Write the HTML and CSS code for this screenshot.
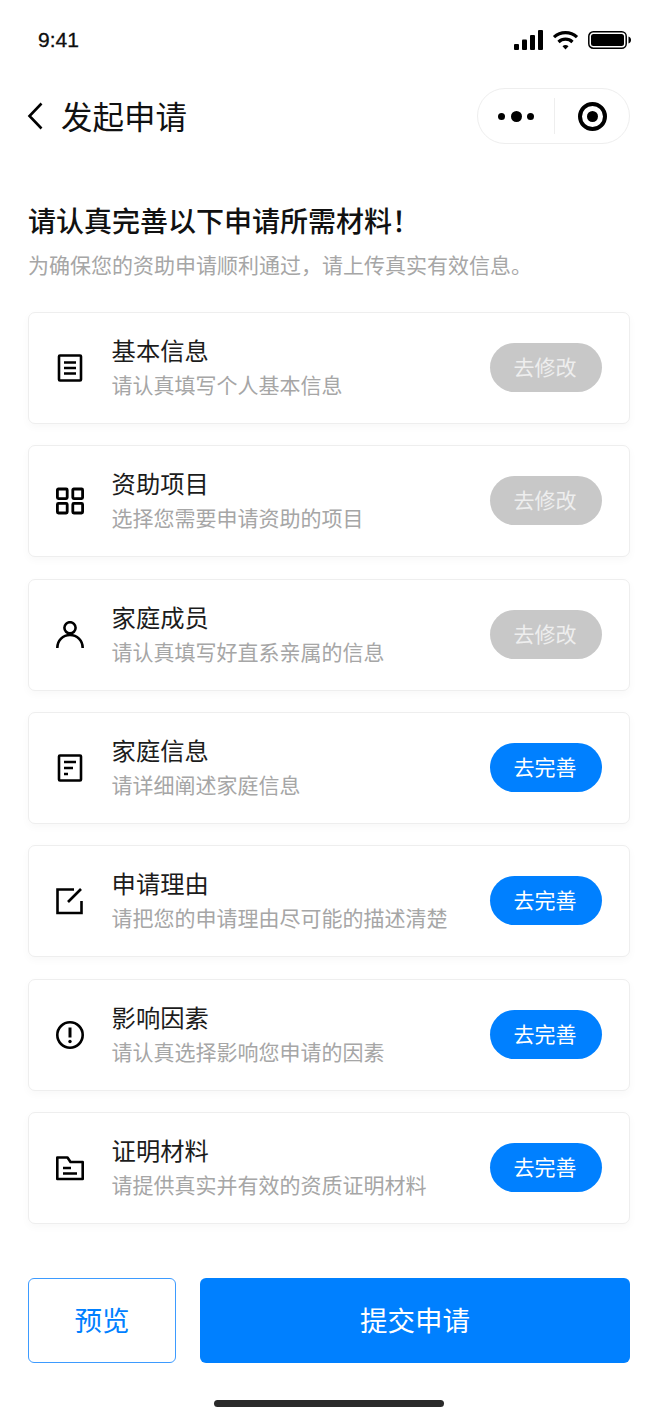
FILE: index.html
```html
<!DOCTYPE html>
<html lang="zh-CN">
<head>
    <meta charset="UTF-8">
    <meta name="viewport" content="width=device-width, initial-scale=1.0">
    <title>发起申请</title>
    <link rel="stylesheet" href="styles.css">
</head>
<body>
    <div class="status_bar">
        <span class="time">9:41</span>
        <div class="status_icons">
            <svg width="29" height="20" viewBox="0 0 29 20" fill="#000">
                <rect x="0" y="14" width="5" height="6" rx="1"/>
                <rect x="8" y="9.5" width="5" height="10.5" rx="1"/>
                <rect x="16" y="5" width="5" height="15" rx="1"/>
                <rect x="24" y="0" width="5" height="20" rx="1"/>
            </svg>
            <svg width="27" height="20" viewBox="0 0 26 20" fill="none" stroke="#000" stroke-width="3.2">
                <path d="M1.5 7.2C8 1 18 1 24.5 7.2"/>
                <path d="M6 12C10 8.2 16 8.2 20 12"/>
                <path d="M10 16.2L13 19.4L16 16.2C14.3 14.6 11.7 14.6 10 16.2Z" fill="#000" stroke="none"/>
            </svg>
            <svg width="43" height="18" viewBox="0 0 43 18">
                <rect x="0.8" y="0.8" width="37.4" height="16.4" rx="4.5" fill="none" stroke="#000" stroke-width="1.5"/>
                <rect x="3" y="3" width="33" height="12" rx="2.5" fill="#000"/>
                <path d="M40.5 5.5C42 6 43 7.3 43 9C43 10.7 42 12 40.5 12.5Z" fill="#000"/>
            </svg>
        </div>
    </div>

    <div class="nav_bar">
        <svg class="back_icon" width="16" height="28" viewBox="0 0 16 28" fill="none" stroke="#000" stroke-width="2.6">
            <path d="M14.5 1.5L2.5 14L14.5 26.5"/>
        </svg>
        <h1 class="nav_title">发起申请</h1>
        <div class="capsule">
            <div class="capsule_more">
                <i class="dot"></i><i class="dot dot_big"></i><i class="dot"></i>
            </div>
            <div class="capsule_line"></div>
            <div class="capsule_close"><i></i></div>
        </div>
    </div>

    <div class="intro">
        <h2>请认真完善以下申请所需材料！</h2>
        <p>为确保您的资助申请顺利通过，请上传真实有效信息。</p>
    </div>

    <div class="card_list">
        <div class="card">
            <svg class="card_icon" viewBox="0 0 28 28" fill="none" stroke="#000" stroke-width="2.6">
                <rect x="3" y="1.5" width="22" height="25" rx="1"/>
                <path d="M8 8.5H20M8 14H20M8 19.5H20"/>
            </svg>
            <div class="card_text">
                <div class="card_title">基本信息</div>
                <div class="card_desc">请认真填写个人基本信息</div>
            </div>
            <button class="pill pill_done">去修改</button>
        </div>
        <div class="card">
            <svg class="card_icon" viewBox="0 0 28 28" fill="none" stroke="#000" stroke-width="2.8">
                <rect x="1.4" y="2" width="9.8" height="9.6" rx="1"/>
                <rect x="16.8" y="2" width="9.8" height="9.6" rx="1"/>
                <rect x="1.4" y="16.4" width="9.8" height="9.6" rx="1"/>
                <rect x="16.8" y="16.4" width="9.8" height="9.6" rx="1"/>
            </svg>
            <div class="card_text">
                <div class="card_title">资助项目</div>
                <div class="card_desc">选择您需要申请资助的项目</div>
            </div>
            <button class="pill pill_done">去修改</button>
        </div>
        <div class="card">
            <svg class="card_icon" viewBox="0 0 28 28" fill="none" stroke="#000" stroke-width="2.6">
                <circle cx="14" cy="6.8" r="5.6"/>
                <path d="M1.3 27C1.3 19.5 7 14 14 14C21 14 26.7 19.5 26.7 27"/>
            </svg>
            <div class="card_text">
                <div class="card_title">家庭成员</div>
                <div class="card_desc">请认真填写好直系亲属的信息</div>
            </div>
            <button class="pill pill_done">去修改</button>
        </div>
        <div class="card">
            <svg class="card_icon" viewBox="0 0 28 28" fill="none" stroke="#000" stroke-width="2.6">
                <rect x="3" y="1.5" width="22" height="25" rx="1"/>
                <path d="M8 8H20M8 14H17M8 20H12"/>
            </svg>
            <div class="card_text">
                <div class="card_title">家庭信息</div>
                <div class="card_desc">请详细阐述家庭信息</div>
            </div>
            <button class="pill pill_todo">去完善</button>
        </div>
        <div class="card">
            <svg class="card_icon" viewBox="0 0 28 28" fill="none" stroke="#000" stroke-width="2.6">
                <path d="M18 2.5H1.5V26H25.5V14"/>
                <path d="M12 15L25 2"/>
            </svg>
            <div class="card_text">
                <div class="card_title">申请理由</div>
                <div class="card_desc">请把您的申请理由尽可能的描述清楚</div>
            </div>
            <button class="pill pill_todo">去完善</button>
        </div>
        <div class="card">
            <svg class="card_icon" viewBox="0 0 28 28" fill="none" stroke="#000" stroke-width="2.6">
                <circle cx="14" cy="14" r="12.7"/>
                <path d="M14 6.5V16.5" stroke-width="3"/>
                <circle cx="14" cy="20.5" r="1.7" fill="#000" stroke="none"/>
            </svg>
            <div class="card_text">
                <div class="card_title">影响因素</div>
                <div class="card_desc">请认真选择影响您申请的因素</div>
            </div>
            <button class="pill pill_todo">去完善</button>
        </div>
        <div class="card">
            <svg class="card_icon" viewBox="0 0 28 28" fill="none" stroke="#000" stroke-width="2.6">
                <path d="M1.3 3.5H11.5L14.5 8H26.7V25H1.3Z" stroke-linejoin="round"/>
                <path d="M7 14H15M7 19.5H21"/>
            </svg>
            <div class="card_text">
                <div class="card_title">证明材料</div>
                <div class="card_desc">请提供真实并有效的资质证明材料</div>
            </div>
            <button class="pill pill_todo">去完善</button>
        </div>
    </div>

    <div class="actions">
        <button class="btn_preview">预览</button>
        <button class="btn_submit">提交申请</button>
    </div>
    <div class="home_bar"></div>
</body>
</html>
```

FILE: styles.css
```css
* {
    box-sizing: border-box;
}
html, body {
    margin: 0;
    padding: 0;
}
body {
    width: 658px;
    height: 1425px;
    overflow: hidden;
    background-color: #fff;
    color: #111;
    font-family: "Noto Sans CJK SC", "Liberation Sans", sans-serif;
}
button {
    font-family: inherit;
    border: none;
    padding: 0;
}

.status_bar {
    height: 80px;
    padding: 0 27px 0 38px;
    display: flex;
    justify-content: space-between;
    align-items: center;
}
.time {
    font-family: "Liberation Sans", sans-serif;
    font-size: 21px;
    -webkit-text-stroke: 0.3px #000;
}
.status_icons {
    display: flex;
    align-items: center;
    gap: 9px;
}

.nav_bar {
    height: 56px;
    margin-top: 8px;
    padding: 0 28px;
    display: flex;
    align-items: center;
}
.back_icon {
    margin: 0 18px 0 -1px;
}
.nav_title {
    margin: 0 0 2px;
    font-size: 31.5px;
    font-weight: 400;
    flex: 1;
}
.capsule {
    width: 153px;
    height: 56px;
    border: 1px solid #eeeeee;
    border-radius: 28px;
    display: flex;
    align-items: center;
}
.capsule_more {
    width: 76px;
    display: flex;
    justify-content: center;
    align-items: center;
    gap: 5.5px;
}
.dot {
    width: 7px;
    height: 7px;
    border-radius: 50%;
    background-color: #000;
}
.dot_big {
    width: 11px;
    height: 11px;
}
.capsule_line {
    width: 1px;
    height: 36px;
    background-color: #eeeeee;
}
.capsule_close {
    flex: 1;
    display: flex;
    justify-content: center;
}
.capsule_close i {
    width: 29px;
    height: 29px;
    border: 4px solid #000;
    border-radius: 50%;
    display: flex;
    align-items: center;
    justify-content: center;
}
.capsule_close i::after {
    content: "";
    width: 11px;
    height: 11px;
    border-radius: 50%;
    background-color: #000;
}

.intro {
    margin-top: 54px;
    padding: 0 28px;
}
.intro h2 {
    margin: 0;
    font-size: 28px;
    line-height: 45px;
    font-weight: 500;
}
.intro p {
    margin: 0;
    font-size: 21px;
    line-height: 42px;
    color: #a6a6a6;
}

.card_list {
    margin-top: 27px;
    padding: 0 28px;
    display: flex;
    flex-direction: column;
    gap: 21.33px;
}
.card {
    height: 112px;
    padding: 0 27px;
    background-color: #fff;
    border: 1px solid #eeeeee;
    border-radius: 7px;
    box-shadow: 0 3px 8px rgba(0, 0, 0, 0.03);
    display: flex;
    align-items: center;
}
.card_icon {
    width: 28px;
    height: 28px;
    flex-shrink: 0;
}
.card_text {
    flex: 1;
    margin: 0 0 1px 27.6px;
}
.card_title {
    font-size: 24.3px;
    line-height: 34px;
    color: #1c1c1c;
}
.card_desc {
    font-size: 21px;
    line-height: 35px;
    color: #a6a6a6;
}
.pill {
    width: 112px;
    height: 49px;
    margin-bottom: 1px;
    padding: 0 2px 3px 0;
    border-radius: 25px;
    font-size: 21px;
    color: #fff;
}
.pill_done {
    background-color: #c8c8c8;
    color: #eeeeee;
}
.pill_todo {
    background-color: #0080ff;
}

.actions {
    margin-top: 54px;
    padding: 0 28px;
    display: flex;
    gap: 24px;
}
.actions button {
    height: 85px;
    padding-bottom: 2px;
    font-size: 27.5px;
    border-radius: 6px;
}
.btn_preview {
    width: 148px;
    background-color: #fff;
    border: 1.5px solid #3d9bff;
    color: #0080ff;
}
.btn_submit {
    flex: 1;
    background-color: #0080ff;
    color: #fff;
}
.home_bar {
    width: 230px;
    height: 7px;
    margin: 37px auto 0;
    border-radius: 4px;
    background-color: #2a2a2a;
}
```
